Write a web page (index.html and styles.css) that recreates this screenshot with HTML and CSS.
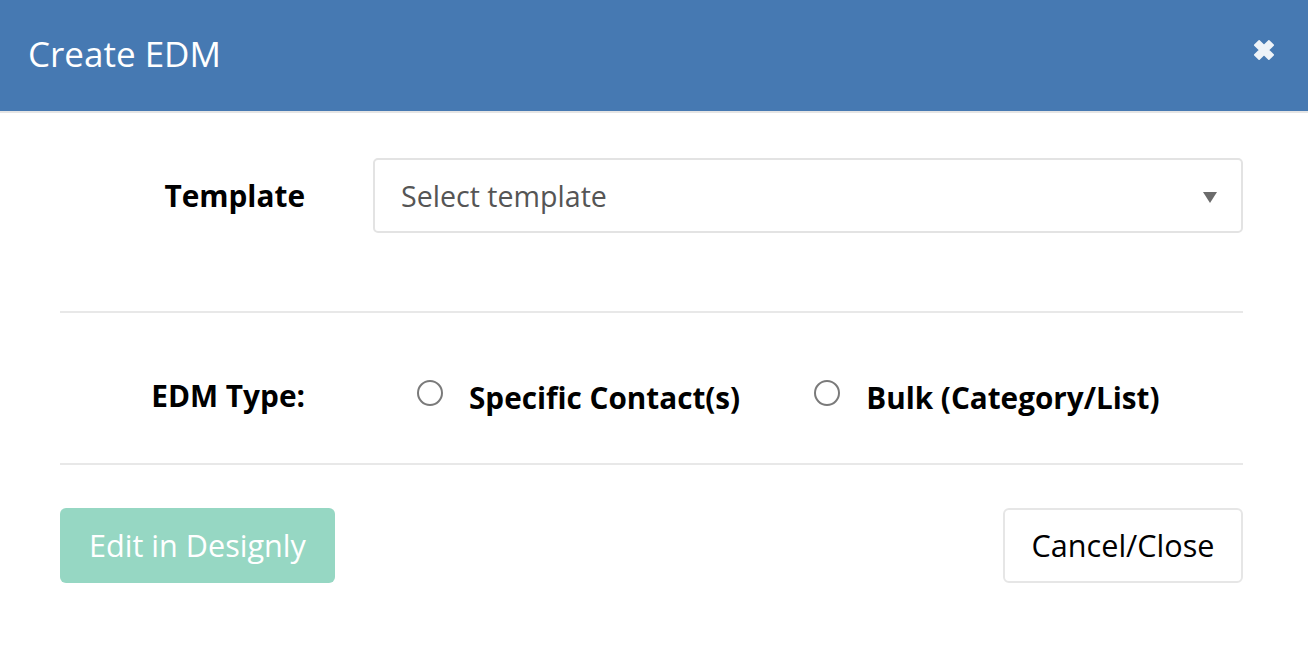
FILE: index.html
```html
<!DOCTYPE html>
<html>
<head>
<meta charset="utf-8">
<link rel="stylesheet" href="styles.css">
</head>
<body>
<div class="modal">
  <div class="modal-header">
    <h1 class="modal-title">Create EDM</h1>
    <button class="close" aria-label="Close">
      <svg viewBox="0 0 24 24" width="24" height="24"><path d="M3.5 7.5 L7.5 3.5 L12 8 L16.5 3.5 L20.5 7.5 L16 12 L20.5 16.5 L16.5 20.5 L12 16 L7.5 20.5 L3.5 16.5 L8 12 Z" fill="currentColor" stroke="currentColor" stroke-width="1.5" stroke-linejoin="round"/></svg>
    </button>
  </div>
  <div class="modal-body">
    <div class="form-row template-row">
      <label class="row-label">Template</label>
      <div class="select">
        <span class="select-text">Select template</span>
        <span class="caret"></span>
      </div>
    </div>
    <hr class="divider">
    <div class="form-row type-row">
      <label class="row-label">EDM Type:</label>
      <div class="radios">
        <label class="radio"><span class="radio-circle"></span><span class="radio-text">Specific Contact(s)</span></label>
        <label class="radio"><span class="radio-circle"></span><span class="radio-text">Bulk (Category/List)</span></label>
      </div>
    </div>
    <hr class="divider">
    <div class="actions">
      <button class="btn btn-primary">Edit in Designly</button>
      <button class="btn btn-default">Cancel/Close</button>
    </div>
  </div>
</div>
</body>
</html>
```

FILE: styles.css
```css
* { box-sizing: border-box; }
html, body {
  margin: 0;
  padding: 0;
  background: #ffffff;
  font-family: "Open Sans", "Noto Sans", sans-serif;
  color: #000;
}
.modal {
  width: 1308px;
  height: 668px;
  background: #fff;
}
.modal-header {
  height: 113px;
  background: #4679b2;
  border-bottom: 2px solid #e5e5e5;
  display: flex;
  align-items: center;
  justify-content: space-between;
  padding: 0 31px 4px 28px;
}
.modal-title {
  margin: 0;
  font-size: 35px;
  font-weight: 400;
  color: #ffffff;
  line-height: 1;
}
.close {
  border: none;
  background: none;
  padding: 0;
  color: #eef3f8;
  width: 26px;
  height: 26px;
  display: flex;
  align-items: center;
  justify-content: center;
  margin-top: -7px;
}
.close svg { width: 26px; height: 26px; }
.modal-body {
  padding: 0 65px 0 60px;
}
.form-row {
  display: grid;
  grid-template-columns: 245px 1fr;
  column-gap: 68px;
  align-items: center;
}
.row-label {
  text-align: right;
  font-weight: 700;
  font-size: 29.8px;
  color: #000;
}
.template-row {
  margin-top: 45px;
  margin-bottom: 78px;
}
.select {
  height: 75px;
  border: 2px solid #e3e3e3;
  border-radius: 5px;
  display: flex;
  align-items: center;
  justify-content: space-between;
  padding: 0 24px 0 26px;
}
.select-text {
  font-size: 28.6px;
  color: #555555;
}
.caret {
  width: 0;
  height: 0;
  border-left: 7px solid transparent;
  border-right: 7px solid transparent;
  border-top: 11px solid #6b6b6b;
  margin-top: 3px;
}
.divider {
  margin: 0;
  border: none;
  border-top: 2px solid #e8e8e8;
}
.type-row {
  margin-top: 47px;
  margin-bottom: 29px;
  height: 74px;
}
.type-row .row-label { margin-top: -4px; }
.radios {
  display: flex;
  align-items: center;
  gap: 74px;
  padding-left: 44px;
}
.radio {
  display: flex;
  align-items: center;
  gap: 26px;
}
.radio-circle {
  width: 26px;
  height: 26px;
  border: 2px solid #7a7a7a;
  border-radius: 50%;
  margin-top: -8px;
}
.radio-text {
  font-size: 29.7px;
  font-weight: 700;
  color: #000;
}
.actions {
  margin-top: 43px;
  display: flex;
  justify-content: space-between;
}
.btn {
  height: 75px;
  font-family: "Open Sans", "Noto Sans", sans-serif;
  font-size: 30.6px;
  border-radius: 6px;
  padding: 0;
  line-height: 1;
}
.btn-primary {
  background: #96d7c3;
  color: #ffffff;
  border: none;
  width: 275px;
}
.btn-default {
  background: #ffffff;
  color: #000;
  border: 2px solid #e6e6e6;
  width: 240px;
}
```
